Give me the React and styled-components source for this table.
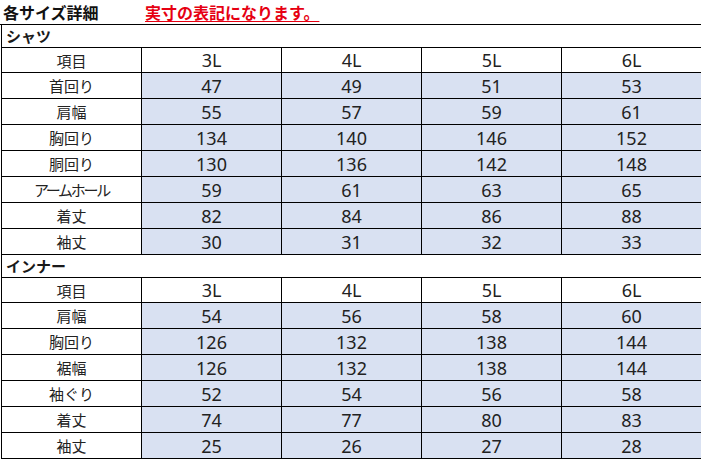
import React from "react";
import styled, { createGlobalStyle } from "styled-components";

const GlobalStyle = createGlobalStyle`
  html, body { margin: 0; padding: 0; background: #fff; }
  body { font-family: "Noto Sans", "Noto Sans CJK JP", sans-serif; color: #1a1a1a; }
`;

const Page = styled.div`
  width: 701px;
`;

const TitleBar = styled.div`
  display: flex;
  align-items: center;
  box-sizing: border-box;
  height: 25px;
  padding-left: 3px;
  border-bottom: 1px solid #000;
  font-family: "Noto Sans CJK JP", sans-serif;
  font-size: 16px;
  font-weight: 700;
`;

const Heading = styled.span`
  width: 142px;
  flex: none;
  color: #111;
`;

const Notice = styled.span`
  color: #e60012;
  text-decoration: underline;
  text-underline-offset: 2px;
`;

const Table = styled.table`
  border-collapse: collapse;
  table-layout: fixed;
  width: 700px;
  margin-left: 1px;
`;

const Col = styled.col`
  width: ${(p) => p.$w}px;
`;

const SectionCell = styled.td`
  height: 22px;
  padding: 0 0 0 4px;
  border-left: 1px solid #000;
  border-top: ${(p) => (p.$first ? "none" : "1px solid #000")};
  border-bottom: 1px solid #000;
  border-right: none;
  text-align: left;
  font-family: "Noto Sans CJK JP", sans-serif;
  font-size: 15px;
  font-weight: 700;
  line-height: 22px;
`;

const Row = styled.tr`
  height: ${(p) => p.$h}px;
`;

const Cell = styled.td`
  padding: 0;
  border: 1px solid #000;
  text-align: center;
  vertical-align: middle;
  background: ${(p) => (p.$shaded ? "#d9e1f2" : "#fff")};
  font-family: ${(p) => (p.$label ? '"Noto Sans CJK JP", sans-serif' : '"Noto Sans", sans-serif')};
  font-size: ${(p) => (p.$label ? 15 : 18)}px;
  letter-spacing: ${(p) => p.$squeeze || 0}px;
  line-height: 1;
  color: #222;
`;

const sizes = ["3L", "4L", "5L", "6L"];

const sections = [
  {
    name: "シャツ",
    rows: [
      ["首回り", 47, 49, 51, 53],
      ["肩幅", 55, 57, 59, 61],
      ["胸回り", 134, 140, 146, 152],
      ["胴回り", 130, 136, 142, 148],
      ["アームホール", 59, 61, 63, 65],
      ["着丈", 82, 84, 86, 88],
      ["袖丈", 30, 31, 32, 33],
    ],
  },
  {
    name: "インナー",
    rows: [
      ["肩幅", 54, 56, 58, 60],
      ["胸回り", 126, 132, 138, 144],
      ["裾幅", 126, 132, 138, 144],
      ["袖ぐり", 52, 54, 56, 58],
      ["着丈", 74, 77, 80, 83],
      ["袖丈", 25, 26, 27, 28],
    ],
  },
];

export default function App() {
  return (
    <Page>
      <GlobalStyle />
      <TitleBar>
        <Heading>各サイズ詳細</Heading>
        <Notice>実寸の表記になります。</Notice>
      </TitleBar>
      <Table>
        <colgroup>
          <Col $w={140} />
          <Col $w={140} />
          <Col $w={140} />
          <Col $w={140} />
          <Col $w={140} />
        </colgroup>
        {sections.map((s, si) => (
          <tbody key={s.name}>
            <tr>
              <SectionCell colSpan={5} $first={si === 0}>
                {s.name}
              </SectionCell>
            </tr>
            <Row $h={25}>
              <Cell $label>項目</Cell>
              {sizes.map((z) => (
                <Cell key={z}>{z}</Cell>
              ))}
            </Row>
            {s.rows.map(([label, ...vals]) => (
              <Row key={label} $h={26}>
                <Cell $label $squeeze={label.length > 4 ? -2.3 : 0}>
                  {label}
                </Cell>
                {vals.map((v, i) => (
                  <Cell key={i} $shaded>
                    {v}
                  </Cell>
                ))}
              </Row>
            ))}
          </tbody>
        ))}
      </Table>
    </Page>
  );
}
